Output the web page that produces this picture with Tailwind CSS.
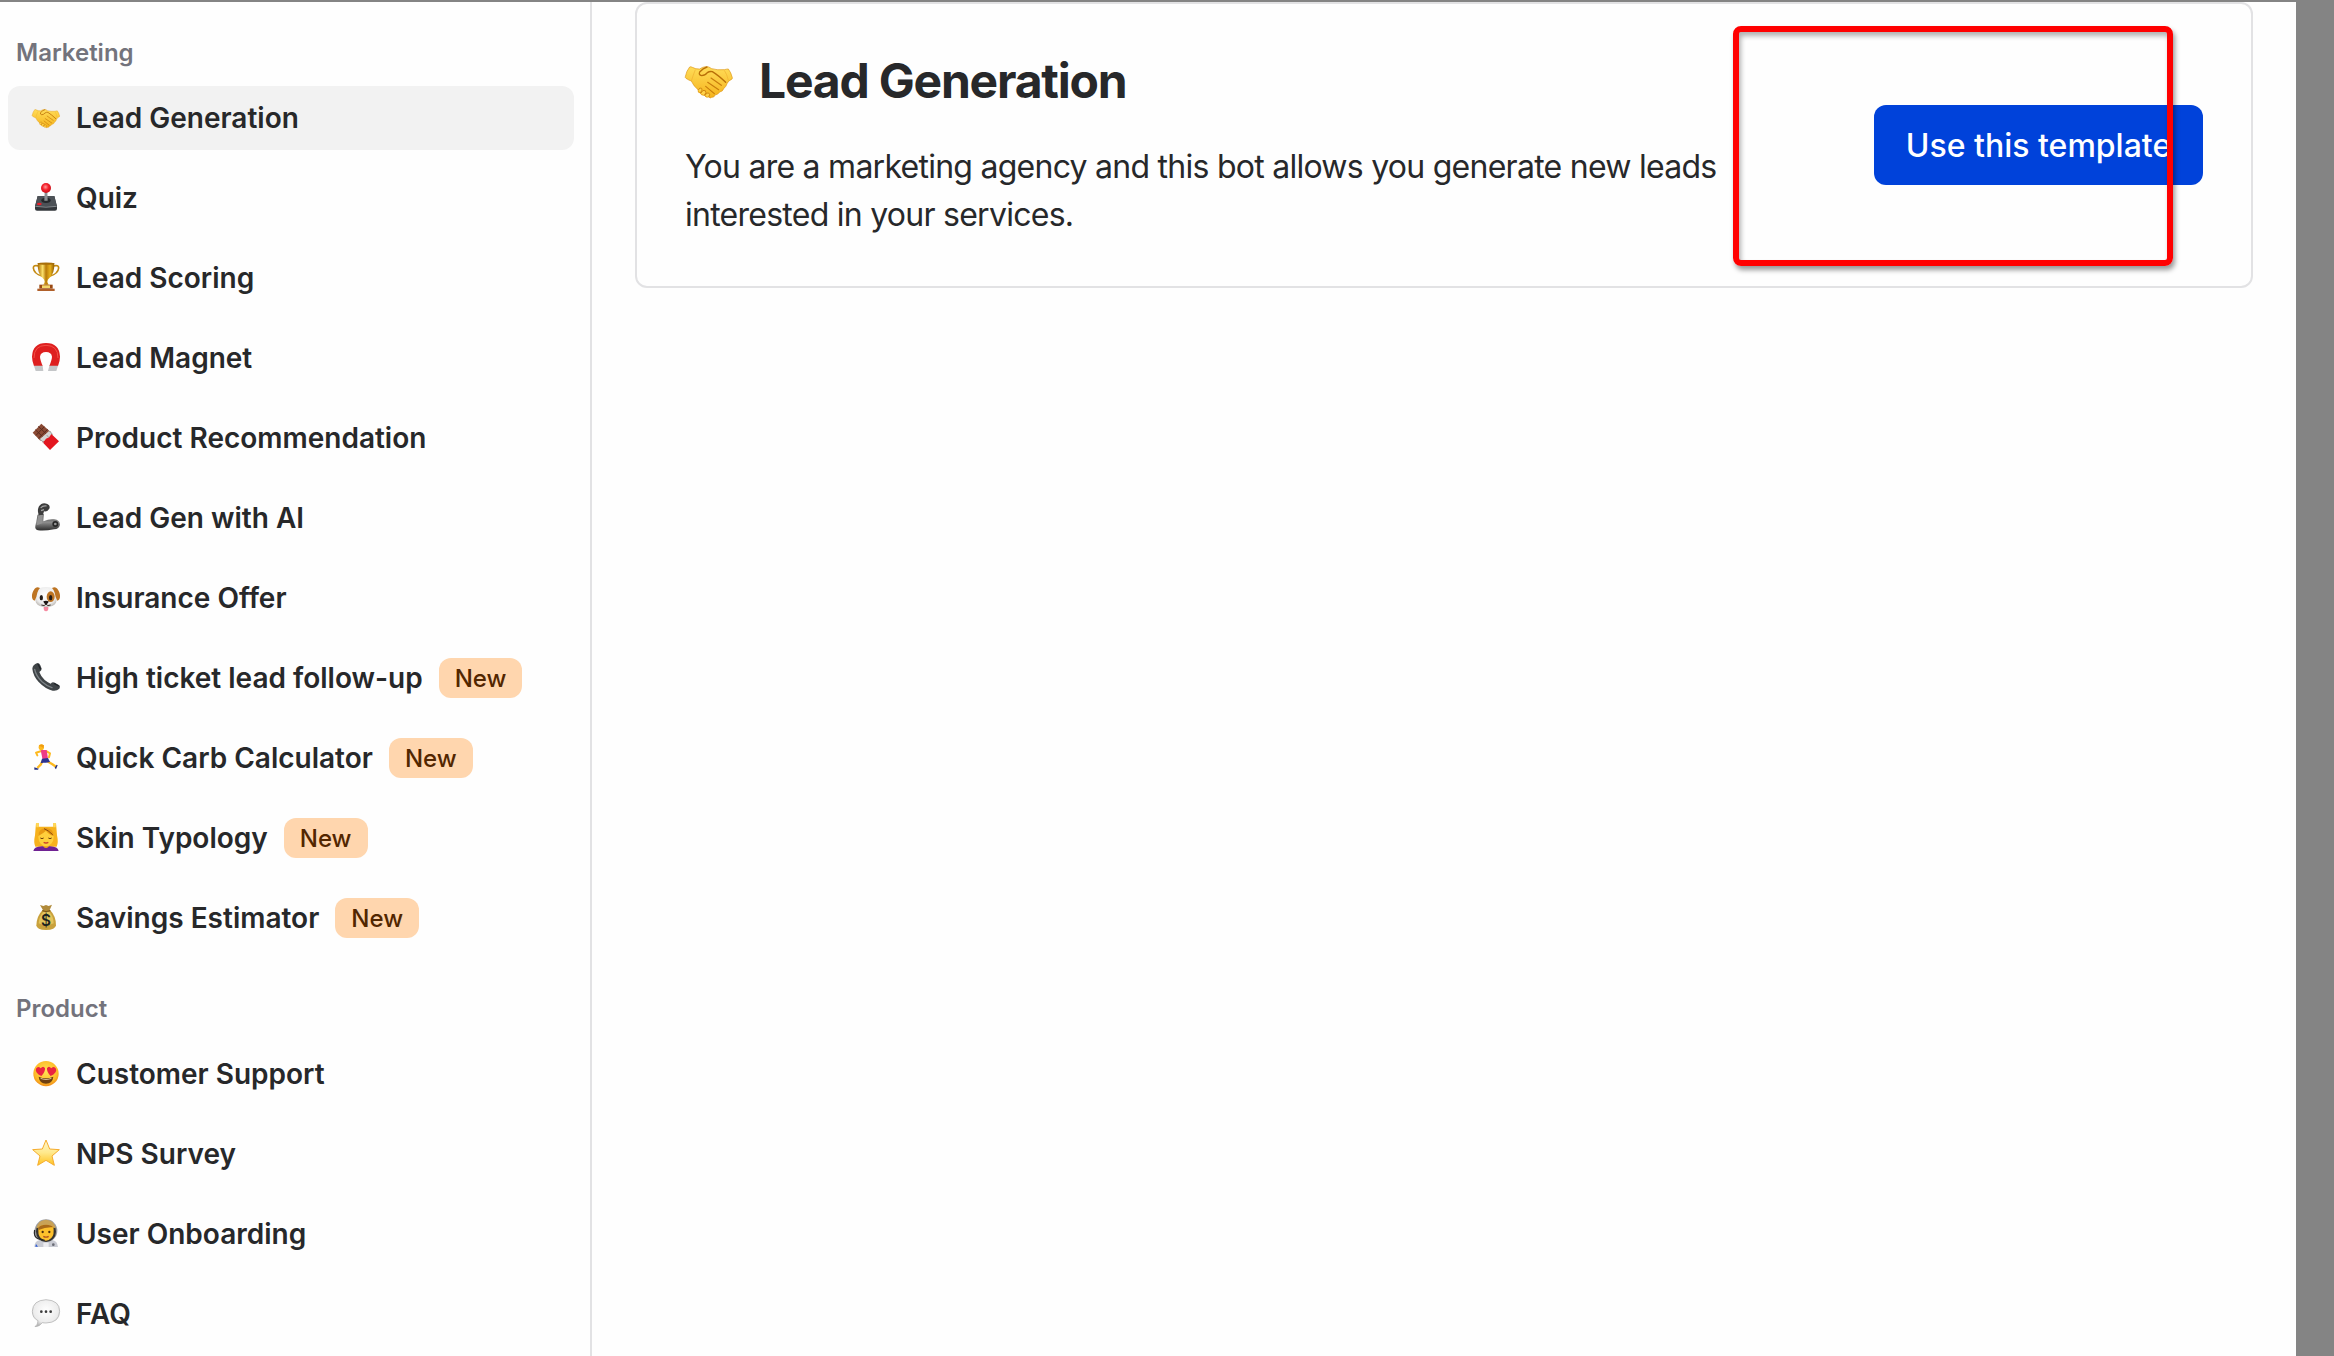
<!DOCTYPE html>
<html lang="en">
<head>
<meta charset="utf-8">
<title>Templates</title>
<script src="https://cdn.jsdelivr.net/npm/@tailwindcss/browser@4"></script>
</head>
<body class="h-[1356px] overflow-hidden bg-[#848484] font-['Inter',sans-serif] text-[#27282a]">
<svg class="absolute h-0 w-0">
  <defs>
    <linearGradient id="gold" x1="0" y1="0" x2="0" y2="1"><stop offset="0" stop-color="#ffdc58"/><stop offset="1" stop-color="#f5b31c"/></linearGradient>
    <linearGradient id="cup" x1="0" y1="0" x2="1" y2="0"><stop offset="0" stop-color="#a86a00"/><stop offset=".3" stop-color="#fbe06a"/><stop offset=".5" stop-color="#b87a08"/><stop offset=".75" stop-color="#e8b21e"/><stop offset="1" stop-color="#8f5a00"/></linearGradient>
    <linearGradient id="steel" x1="0" y1="0" x2="0" y2="1"><stop offset="0" stop-color="#333"/><stop offset=".5" stop-color="#8d8d8d"/><stop offset="1" stop-color="#2c2c2c"/></linearGradient>
    <linearGradient id="starfill" x1="0" y1="0" x2="0" y2="1"><stop offset="0" stop-color="#fff6d0"/><stop offset=".5" stop-color="#ffe98c"/><stop offset="1" stop-color="#ffc21f"/></linearGradient>
    <radialGradient id="face" cx=".5" cy=".4" r=".6"><stop offset="0" stop-color="#ffe356"/><stop offset=".75" stop-color="#fdbb27"/><stop offset="1" stop-color="#f08c1a"/></radialGradient>
    <radialGradient id="ball" cx=".45" cy=".4" r=".6"><stop offset="0" stop-color="#ff9a9a"/><stop offset=".5" stop-color="#f5222d"/><stop offset="1" stop-color="#c80f18"/></radialGradient>
    <radialGradient id="bubble" cx=".5" cy=".4" r=".6"><stop offset="0" stop-color="#ffffff"/><stop offset=".75" stop-color="#ececec"/><stop offset="1" stop-color="#b9b9b9"/></radialGradient>
    <radialGradient id="fur" cx=".5" cy=".4" r=".65"><stop offset="0" stop-color="#ffffff"/><stop offset=".7" stop-color="#ececec"/><stop offset="1" stop-color="#b5b0aa"/></radialGradient>
    <symbol id="handshake" viewBox="0 0 144 100" overflow="visible">
      <path d="M14 2Q17 0 22 3Q32 9 44 8Q52 2 62 1Q72 0 80 7Q98 12 118 10Q126 8 130 8Q138 18 142 34Q143 38 138 40Q130 43 126 52Q124 60 116 67Q114 75 104 77Q98 86 90 86Q88 94 80 93Q76 97 71 92Q62 95 58 87Q48 88 46 80Q38 80 39 70Q26 60 19 44Q12 42 3 36Q0 34 1 31Q4 14 14 2Z" fill="url(#gold)" stroke="#dc9410" stroke-width="2"/>
      <path d="M66 2Q54 6 44 17Q40 26 50 28Q60 28 67 19Q74 14 82 16Q100 27 122 48" fill="none" stroke="#b96f08" stroke-width="4" stroke-linecap="round" stroke-linejoin="round"/>
      <path d="M78 35L109 57M68 48L101 70M62 60L88 82" stroke="#c87d0c" stroke-width="3.5" stroke-linecap="round"/>
      <path d="M118 12Q126 24 130 42M19 44Q24 28 31 10" fill="none" stroke="#f0b030" stroke-width="2"/>
      <path d="M40 71Q44 62 50 66Q54 70 46 80M47 81Q54 68 61 73Q66 78 58 87M60 88Q64 77 71 80Q77 84 71 92" fill="#ffd24a" stroke="#c87d0c" stroke-width="2.6"/>
    </symbol>
  </defs>
</svg>

<div class="flex h-full w-[2296px] border-t-2 border-[#848484] bg-[#fefefe]">
  <!-- Template list -->
  <aside class="flex w-[592px] shrink-0 flex-col gap-10 border-r-2 border-[#e2e2e4] pt-8 pr-4 pl-2">
    <section class="flex flex-col gap-4">
      <h2 class="h-9 pl-2 text-2xl leading-[38px] font-semibold text-[#73737c]">Marketing</h2>

      <a class="flex h-16 items-center gap-4 rounded-xl bg-[#f2f2f2] pl-6 text-[28px] font-semibold">
        <svg class="h-7 w-7 shrink-0 overflow-visible"><use href="#handshake" width="28" height="20" y="5"/></svg>
        <span>Lead Generation</span>
      </a>
      <a class="flex h-16 items-center gap-4 pl-6 text-[28px] font-semibold">
        <svg class="h-7 w-7 shrink-0 overflow-visible" viewBox="0 0 84 84">
          <path d="M17 36H67L75 66V74Q75 80 69 80H15Q9 80 9 74V66Z" fill="#33373b"/>
          <path d="M17 36H67L74 65Q42 70 10 65Z" fill="#4c5156"/>
          <path d="M10 67Q42 72 74 67" stroke="#858a8e" stroke-width="3" fill="none"/>
          <ellipse cx="42" cy="49" rx="14" ry="8" fill="#25282b"/>
          <path d="M38 24H46L47 50H37Z" fill="#8d9093"/>
          <ellipse cx="22" cy="60" rx="7" ry="4" fill="#e8202a"/>
          <circle cx="42" cy="12" r="15" fill="url(#ball)"/>
        </svg>
        <span>Quiz</span>
      </a>
      <a class="flex h-16 items-center gap-4 pl-6 text-[28px] font-semibold">
        <svg class="h-7 w-7 shrink-0 overflow-visible" viewBox="0 0 84 84">
          <path d="M20 6Q4 2 4 12Q6 30 30 36M64 6Q80 2 80 12Q78 30 54 36" fill="none" stroke="#c48a12" stroke-width="5"/>
          <path d="M17 -3H67Q68 30 52 42Q46 46 46 54L50 62H34L38 54Q38 46 32 42Q16 30 17 -3Z" fill="url(#cup)"/>
          <ellipse cx="42" cy="-1" rx="25" ry="3.5" fill="#a86f0a"/>
          <path d="M22 62H62V74H22Z" fill="#9a4a12"/>
          <path d="M30 64H54V72H30Z" fill="#f3d66a"/>
          <path d="M16 74H68V81H16Z" fill="#b0602a"/>
        </svg>
        <span>Lead Scoring</span>
      </a>
      <a class="flex h-16 items-center gap-4 pl-6 text-[28px] font-semibold">
        <svg class="h-7 w-7 shrink-0 overflow-visible" viewBox="0 0 84 84">
          <path d="M6 66Q0 50 0 38Q2 -3 42 -3Q82 -3 84 38Q84 50 78 66H52Q60 46 60 38Q58 24 42 24Q26 24 24 38Q24 46 32 66Z" fill="#de1f1f"/>
          <path d="M6 42Q6 4 42 4Q78 4 78 42" fill="none" stroke="#f25046" stroke-width="3"/>
          <path d="M6 65H32L34 81H11ZM78 65H52L48 81H73Z" fill="#c4c6c8"/>
        </svg>
        <span>Lead Magnet</span>
      </a>
      <a class="flex h-16 items-center gap-4 pl-6 text-[28px] font-semibold">
        <svg class="h-7 w-7 shrink-0 overflow-visible" viewBox="0 0 84 84">
          <path d="M28 -1L56 24L25 50L2 26Z" fill="#8a4a34"/>
          <path d="M19 7L46 33M10 17L36 42M37 8L12 34M47 16L19 43" stroke="#5a2b1e" stroke-width="3"/>
          <path d="M51 21L62 31L35 56L23 46Z" fill="#d4d4d2"/>
          <path d="M58 30L81 52L54 78L31 54Q38 52 42 44Q52 42 58 30Z" fill="#e3161f"/>
          <path d="M53 21L62 32M24 46L36 56M44 33L50 40" stroke="#9da09e" stroke-width="3"/>
        </svg>
        <span>Product Recommendation</span>
      </a>
      <a class="flex h-16 items-center gap-4 pl-6 text-[28px] font-semibold">
        <svg class="h-7 w-7 shrink-0 overflow-visible" viewBox="0 0 84 84">
          <path d="M17 32L35 30L34 52Q52 44 66 46Q84 48 84 62Q82 74 66 76Q40 81 18 79Q8 76 10 66Z" fill="url(#steel)"/>
          <path d="M18 34L33 32L31 58L14 64Z" fill="#929292"/>
          <path d="M18 24Q16 8 28 0Q36 -5 46 0Q56 4 52 14Q46 24 36 22L33 32L20 34Z" fill="#3d3d3d"/>
          <path d="M26 12Q32 4 44 6M27 20L36 17" stroke="#a2a2a2" stroke-width="3.5" fill="none"/>
          <circle cx="70" cy="60" r="9" fill="#272727"/><circle cx="70" cy="60" r="4" fill="#969696"/>
        </svg>
        <span>Lead Gen with AI</span>
      </a>
      <a class="flex h-16 items-center gap-4 pl-6 text-[28px] font-semibold">
        <svg class="h-7 w-7 shrink-0 overflow-visible" viewBox="0 0 84 84">
          <path d="M42 9Q62 8 70 22Q78 42 72 56Q64 69 42 69Q20 69 12 56Q6 42 14 22Q22 8 42 9Z" fill="url(#fur)"/>
          <path d="M24 12Q14 6 8 14Q-2 28 0 40Q2 50 8 50Q14 40 16 26Q18 18 24 12ZM60 12Q70 6 76 14Q86 28 84 40Q82 50 76 50Q70 40 68 26Q66 18 60 12Z" fill="#bd7423"/>
          <ellipse cx="56" cy="38" rx="12" ry="16" fill="#bd7423"/>
          <ellipse cx="28" cy="41" rx="5" ry="8" fill="#241c18"/><ellipse cx="56" cy="41" rx="5" ry="8" fill="#241c18"/>
          <path d="M35 69H49Q50 82 42 82Q34 82 35 69Z" fill="#f58aa0"/>
          <path d="M28 63Q38 68 42 60Q46 68 56 63" fill="none" stroke="#3a302b" stroke-width="3"/>
          <path d="M34 52Q42 48 50 52Q50 58 42 62Q34 58 34 52Z" fill="#1c1614"/>
        </svg>
        <span>Insurance Offer</span>
      </a>
      <a class="flex h-16 items-center gap-4 pl-6 text-[28px] font-semibold">
        <svg class="h-7 w-7 shrink-0 overflow-visible" viewBox="0 0 84 84">
          <path d="M16 -3Q22 -3 25 4L29 14Q29 20 22 24Q26 36 38 48Q48 56 56 59Q62 52 68 56L82 64Q86 68 82 74Q74 82 62 80Q40 75 20 54Q3 35 1 14Q2 2 16 -3Z" fill="#3f4447"/>
          <path d="M8 16Q12 36 30 53Q46 67 60 71" fill="none" stroke="#7c8286" stroke-width="4" stroke-linecap="round"/>
          <path d="M18 0L26 16M66 58L80 66" stroke="#22262a" stroke-width="4"/>
        </svg>
        <span>High ticket lead follow-up</span>
        <span class="flex h-10 items-center rounded-xl bg-[#ffd6ae] px-4 pt-px text-2xl font-medium text-[#522600]">New</span>
      </a>
      <a class="flex h-16 items-center gap-4 pl-6 text-[28px] font-semibold">
        <svg class="h-7 w-7 shrink-0 overflow-visible" viewBox="0 0 84 84">
          <path d="M26 22L12 26L16 34M44 22L54 28L51 40" fill="none" stroke="#fdb91f" stroke-width="6" stroke-linejoin="round" stroke-linecap="round"/>
          <path d="M32 50L26 62L16 72M46 52L60 60L72 68" fill="none" stroke="#fdb91f" stroke-width="7" stroke-linejoin="round"/>
          <path d="M26 18L44 18L48 44L32 48Z" fill="#ee3a86"/>
          <path d="M30 44L48 42L54 54L42 56L34 56L26 58Z" fill="#2c3290"/>
          <ellipse cx="28" cy="10" rx="8" ry="9" fill="#fdb91f"/>
          <path d="M20 6Q26 -2 36 4L34 12Q28 6 20 6Z" fill="#f09c10"/>
          <path d="M7 70L20 74L18 77H7ZM74 62L77 64L72 76L68 71Z" fill="#27317e"/>
        </svg>
        <span>Quick Carb Calculator</span>
        <span class="flex h-10 items-center rounded-xl bg-[#ffd6ae] px-4 pt-px text-2xl font-medium text-[#522600]">New</span>
      </a>
      <a class="flex h-16 items-center gap-4 pl-6 text-[28px] font-semibold">
        <svg class="h-7 w-7 shrink-0 overflow-visible" viewBox="0 0 84 84">
          <path d="M12 -3H20V8H64V-3H72L75 34Q80 56 74 68H10Q4 56 9 34Z" fill="#f7b21d"/>
          <path d="M4 81Q6 68 30 67H54Q78 68 80 81Z" fill="#6f2193"/>
          <path d="M34 58H50V68Q42 76 34 68Z" fill="#f0a51c"/>
          <ellipse cx="42" cy="39" rx="23" ry="28" fill="#ffcf3c"/>
          <path d="M19 36Q20 12 42 11Q64 12 65 36Q50 32 42 20Q34 28 19 36Z" fill="#e89a14"/>
          <path d="M36 14Q48 18 62 32" fill="none" stroke="#8a4a0a" stroke-width="3"/>
          <path d="M25 42Q30 46 35 42M49 42Q54 46 59 42" fill="none" stroke="#6b3a08" stroke-width="3"/>
          <path d="M35 55Q42 59 49 55" stroke="#c93c2a" stroke-width="4" fill="none"/>
          <path d="M12 -3H20V10H13ZM64 -3H72L71 10H64Z" fill="#ffd95a"/>
        </svg>
        <span>Skin Typology</span>
        <span class="flex h-10 items-center rounded-xl bg-[#ffd6ae] px-4 pt-px text-2xl font-medium text-[#522600]">New</span>
      </a>
      <a class="flex h-16 items-center gap-4 pl-6 text-[28px] font-semibold">
        <svg class="h-7 w-7 shrink-0 overflow-visible" viewBox="0 0 84 84">
          <path d="M24 3L34 6L42 3L50 6L60 2L52 20H34Z" fill="#b08a3a"/>
          <path d="M32 18H54Q72 36 72 64Q70 78 42 78Q14 78 13 64Q14 36 32 18Z" fill="#c9a13c"/>
          <path d="M34 24H52Q64 36 65 58Q42 70 20 58Q22 36 34 24Z" fill="#e3c45c"/>
          <path d="M31 20Q42 24 55 20" stroke="#7a5518" stroke-width="4" fill="none"/>
          <text x="42" y="66" text-anchor="middle" font-size="46" font-weight="600" fill="#1e2420">$</text>
        </svg>
        <span>Savings Estimator</span>
        <span class="flex h-10 items-center rounded-xl bg-[#ffd6ae] px-4 pt-px text-2xl font-medium text-[#522600]">New</span>
      </a>
    </section>

    <section class="flex flex-col gap-4">
      <h2 class="h-9 pl-2 text-2xl leading-[38px] font-semibold text-[#73737c]">Product</h2>

      <a class="flex h-16 items-center gap-4 pl-6 text-[28px] font-semibold">
        <svg class="h-7 w-7 shrink-0 overflow-visible" viewBox="0 0 84 84">
          <circle cx="42" cy="41" r="38" fill="url(#face)"/>
          <path d="M20 50Q42 60 64 50Q62 70 42 71Q22 70 20 50Z" fill="#6e3f10"/>
          <path d="M25 54Q42 60 59 54L57 57Q42 62 27 57Z" fill="#f7e6c0"/>
          <path d="M28 48Q8 38 12 26Q18 17 26 25Q34 16 39 25Q40 36 28 48ZM56 48Q44 36 45 25Q50 16 58 25Q66 17 72 26Q76 38 56 48Z" fill="#ea2340"/>
        </svg>
        <span>Customer Support</span>
      </a>
      <a class="flex h-16 items-center gap-4 pl-6 text-[28px] font-semibold">
        <svg class="h-7 w-7 shrink-0 overflow-visible" viewBox="0 0 84 84">
          <path d="M42 0L53 27L82 29L60 48L67 76L42 61L17 76L24 48L2 29L31 27Z" fill="url(#starfill)" stroke="#f5ac2c" stroke-width="3" stroke-linejoin="round"/>
        </svg>
        <span>NPS Survey</span>
      </a>
      <a class="flex h-16 items-center gap-4 pl-6 text-[28px] font-semibold">
        <svg class="h-7 w-7 shrink-0 overflow-visible" viewBox="0 0 84 84">
          <path d="M7 81Q8 62 24 60H60Q76 62 78 81Z" fill="#c9cbd3"/>
          <path d="M34 68H50V81H34Z" fill="#ececf0"/>
          <path d="M12 72L18 80H10Z" fill="#2c5bd8"/>
          <circle cx="64" cy="74" r="4" fill="#6a6c76"/>
          <ellipse cx="42" cy="32" rx="34" ry="34" fill="#9c9ea3"/>
          <ellipse cx="42" cy="35" rx="30" ry="31" fill="#37342f"/>
          <path d="M13 25Q18 0 42 -1Q66 0 71 25Q42 14 13 25Z" fill="#c9a257"/>
          <path d="M20 20Q42 8 64 20Q68 44 58 54Q42 70 26 54Q16 44 20 20Z" fill="#fdc02c"/>
          <path d="M20 22Q26 14 42 14Q58 14 64 22Q42 20 20 30Z" fill="#a8691a"/>
          <circle cx="32" cy="36" r="3.5" fill="#4a2c0c"/><circle cx="52" cy="36" r="3.5" fill="#4a2c0c"/>
          <path d="M34 49Q42 54 50 49" stroke="#b0521e" stroke-width="4" fill="none"/>
          <path d="M8 30Q4 50 18 56L38 61" fill="none" stroke="#2a2a2a" stroke-width="4"/>
        </svg>
        <span>User Onboarding</span>
      </a>
      <a class="flex h-16 items-center gap-4 pl-6 text-[28px] font-semibold">
        <svg class="h-7 w-7 shrink-0 overflow-visible" viewBox="0 0 84 84">
          <path d="M42 -1Q83 1 83 34Q82 68 42 69Q36 69 31 68Q22 80 9 80Q18 74 18 62Q1 54 1 34Q2 1 42 -1Z" fill="url(#bubble)" stroke="#a9a9a9" stroke-width="2"/>
          <circle cx="28" cy="35" r="4" fill="#3c3c3c"/><circle cx="42" cy="35" r="4" fill="#3c3c3c"/><circle cx="56" cy="35" r="4" fill="#3c3c3c"/>
        </svg>
        <span>FAQ</span>
      </a>
    </section>
  </aside>

  <!-- Selected template -->
  <main class="relative flex-1 px-[43px]">
    <article class="flex h-[286px] items-center justify-between rounded-xl border-2 border-[#e2e2e4] px-12">
      <div class="flex flex-col gap-[33px]">
        <h1 class="flex h-[58px] items-center gap-[26px] text-5xl font-bold tracking-[-1.2px]">
          <svg class="mt-1 h-[34px] w-12 shrink-0 overflow-visible"><use href="#handshake" width="48" height="34"/></svg>
          <span>Lead Generation</span>
        </h1>
        <p class="text-[32px] leading-[48px] tracking-[-0.74px] whitespace-nowrap">You are a marketing agency and this bot allows you generate new leads<br>interested in your services.</p>
      </div>
      <button class="h-20 w-[329px] rounded-xl bg-[#0042da] pt-0.5 text-[32px] font-medium text-white">Use this template</button>
    </article>
    <!-- Highlight drawn over the button -->
    <div class="absolute top-6 left-[1141px] h-[240px] w-[440px] rounded-lg border-6 border-[#ff0000] shadow-[2px_4px_5px_rgba(0,0,0,0.4),inset_2px_4px_5px_rgba(0,0,0,0.3)]"></div>
  </main>
</div>
</body>
</html>
